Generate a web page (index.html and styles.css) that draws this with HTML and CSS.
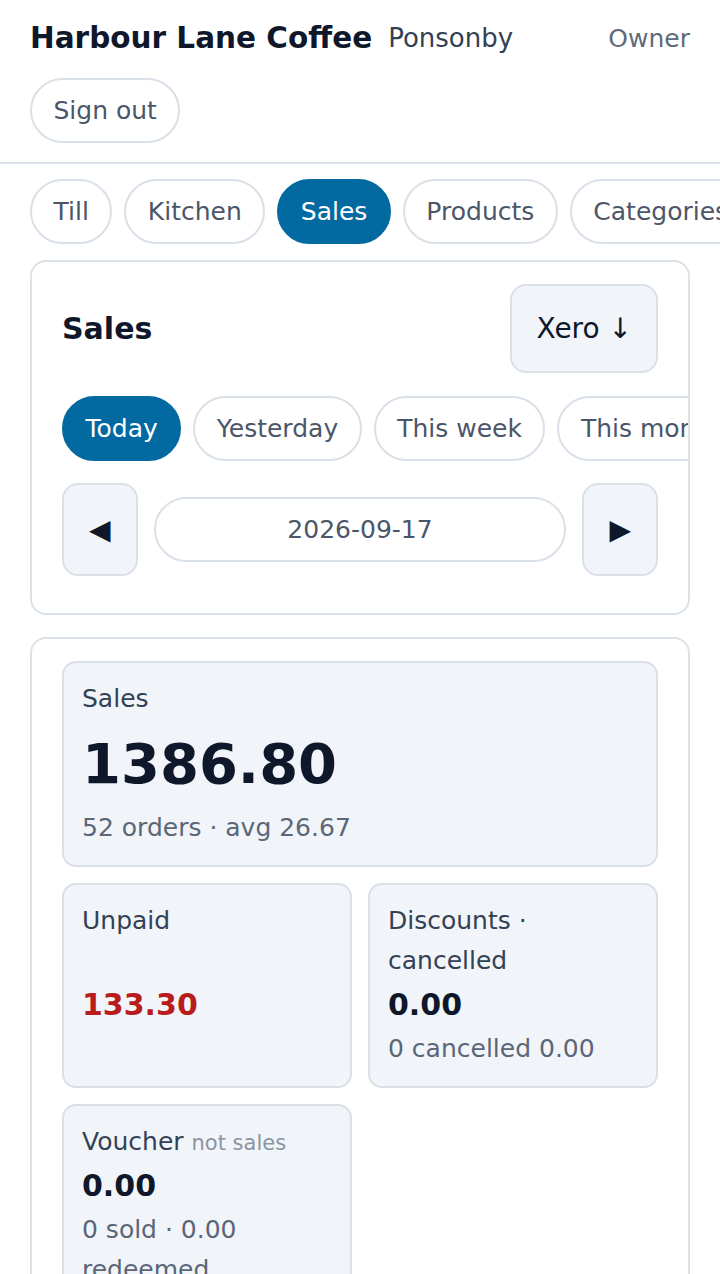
FILE: index.html
```html
<!DOCTYPE html>
<html lang="en">
  <head>
    <meta charset="UTF-8" />
    <meta name="viewport" content="width=device-width, initial-scale=1.0" />
    <title>Harbour Lane Coffee · Sales</title>
    <link rel="stylesheet" href="styles.css">
  </head>
  <body>
    <header class="topbar">
      <div class="brand">
        <h1>Harbour Lane Coffee</h1>
        <span class="venue">Ponsonby</span>
      </div>
      <span class="role">Owner</span>
      <button class="pill">Sign out</button>
    </header>

    <nav class="tabs">
      <button class="pill">Till</button>
      <button class="pill">Kitchen</button>
      <button class="pill active">Sales</button>
      <button class="pill">Products</button>
      <button class="pill">Categories</button>
      <button class="pill">Staff</button>
    </nav>

    <main class="content">
      <section class="card">
        <div class="card-head">
          <h2>Sales</h2>
          <button class="button">Xero ↓</button>
        </div>
        <div class="ranges">
          <button class="pill active">Today</button>
          <button class="pill">Yesterday</button>
          <button class="pill">This week</button>
          <button class="pill">This month</button>
        </div>
        <div class="datebar">
          <button class="button step">◀</button>
          <div class="pill date">2026-09-17</div>
          <button class="button step">▶</button>
        </div>
      </section>

      <section class="card">
        <div class="stats">
          <div class="stat wide">
            <div class="stat-label">Sales</div>
            <div class="stat-value big">1386.80</div>
            <div class="stat-sub">52 orders · avg 26.67</div>
          </div>
          <div class="stat">
            <div class="stat-label">Unpaid</div>
            <div class="stat-value danger">133.30</div>
            <div class="stat-sub"></div>
          </div>
          <div class="stat">
            <div class="stat-label">Discounts · cancelled</div>
            <div class="stat-value">0.00</div>
            <div class="stat-sub">0 cancelled 0.00</div>
          </div>
          <div class="stat">
            <div class="stat-label">Voucher <small>not sales</small></div>
            <div class="stat-value">0.00</div>
            <div class="stat-sub">0 sold · 0.00 redeemed</div>
          </div>
        </div>
      </section>
    </main>
  </body>
</html>
```

FILE: styles.css
```css
/* reset */
* {
  margin: 0;
  padding: 0;
  box-sizing: border-box;
}
html,
body {
  overflow: hidden;
  background: #ffffff;
  font-family: "DejaVu Sans", "Noto Sans", sans-serif;
  line-height: 1.6;
  color: #0f172a;
}
button {
  font-family: inherit;
  cursor: pointer;
}

/* top bar */
.topbar {
  display: flex;
  flex-wrap: wrap;
  justify-content: space-between;
  align-items: center;
  row-gap: 16px;
  column-gap: 16px;
  padding: 15px 30px 19px;
  border-bottom: 2px solid #d9e1ea;
}
.brand {
  display: flex;
  align-items: center;
  gap: 16px;
}
.brand h1 {
  font-size: 29.5px;
  font-weight: 700;
  color: #0f172a;
}
.venue {
  font-size: 26px;
  color: #334155;
}
.role {
  font-size: 25px;
  color: #5f6b7a;
}

/* pills */
.pill {
  flex: 0 0 auto;
  font-size: 25px;
  line-height: 40px;
  padding: 10.5px 21.5px;
  border: 2px solid #d9e0e8;
  border-radius: 999px;
  background: #ffffff;
  color: #4b5668;
  white-space: nowrap;
}
.pill.active {
  background: #0369a1;
  border-color: #0369a1;
  color: #ffffff;
}

/* nav */
.tabs {
  display: flex;
  gap: 12px;
  padding: 15px 30px 16px;
  overflow-x: auto;
  scrollbar-width: none;
}

/* cards */
.content {
  display: flex;
  flex-direction: column;
  gap: 22px;
  padding: 0 30px;
}
.card {
  border: 2px solid #dbe2ea;
  border-radius: 16px;
  padding: 22px 30px 37px;
  overflow: hidden;
}
.card-head {
  display: flex;
  justify-content: space-between;
  align-items: center;
  margin-bottom: 23px;
}
.card-head h2 {
  font-size: 30px;
  font-weight: 700;
}
.button {
  font-size: 28px;
  line-height: 45px;
  padding: 20px 24px;
  background: #f1f5f9;
  border: 2px solid #d9e0e8;
  border-radius: 16px;
  color: #0f172a;
}
.ranges {
  display: flex;
  gap: 12px;
  margin-bottom: 22px;
}
.datebar {
  display: flex;
  align-items: center;
  gap: 16px;
}
.button.step {
  padding: 22px 25px;
  line-height: 45px;
}
.pill.date {
  flex: 1;
  text-align: center;
}

/* stats */
.stats {
  display: grid;
  grid-template-columns: 1fr 1fr;
  gap: 16px;
}
.stat {
  display: flex;
  flex-direction: column;
  justify-content: space-between;
  background: #f1f5f9;
  border: 2px solid #d9e0e8;
  border-radius: 14px;
  padding: 16px 18px 17px;
}
.stat.wide {
  grid-column: span 2;
}
.stat-label {
  font-size: 25px;
  color: #334155;
}
.stat-label small {
  font-size: 21px;
  color: #8a94a3;
}
.stat-value {
  font-size: 30px;
  font-weight: 700;
  line-height: 48px;
  color: #0f172a;
}
.stat-value.big {
  font-size: 56px;
  line-height: 89px;
}
.stat-value.danger {
  color: #b91c1c;
}
.stat-sub {
  font-size: 25px;
  color: #5b6677;
}
```
